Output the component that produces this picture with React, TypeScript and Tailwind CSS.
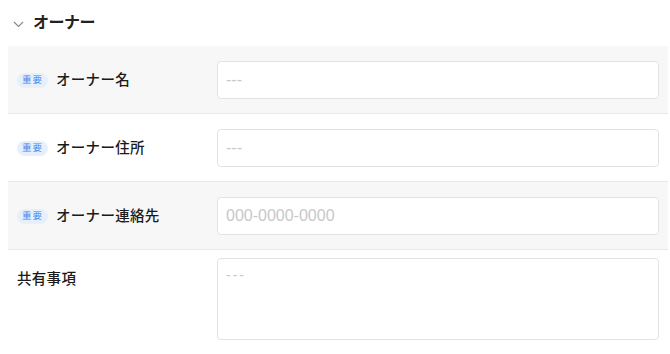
import React from "react";

const font = { fontFamily: '"Liberation Sans", "Noto Sans CJK JP", sans-serif' };

function Badge() {
  return (
    <span className="inline-flex items-center justify-center h-[15px] w-[31px] rounded-full bg-[#e6f0fd] text-[9.5px] text-[#4a86e8] tracking-[1px]">
      重要
    </span>
  );
}

function Row({
  gray,
  required,
  label,
  placeholder,
}: {
  gray: boolean;
  required: boolean;
  label: string;
  placeholder: string;
}) {
  return (
    <div
      className={`flex items-center h-[68px] pl-[9px] pr-[9px] border-b border-[#e9e9e9] ${
        gray ? "bg-[#f7f7f7]" : "bg-white"
      }`}
    >
      <div className="w-[200px] flex items-center gap-[8px] shrink-0 pt-[2px]">
        {required && <Badge />}
        <span className="text-[14.5px] font-medium text-[#1a1a1a] tracking-[0.3px]">{label}</span>
      </div>
      <input
        className="flex-1 h-[38px] rounded-[4px] border border-[#e3e3e3] bg-white px-[8px] text-[16px] text-[#333] placeholder:text-[#c8c8c8] outline-none"
        placeholder={placeholder}
        style={font}
      />
    </div>
  );
}

export default function App() {
  return (
    <div className="w-[670px] h-[354px] bg-white overflow-hidden" style={font}>
      <div className="flex items-center h-[46px] pl-[13px] gap-[9px]">
        <svg width="11" height="7" viewBox="0 0 11 7" className="mt-[2px]">
          <path d="M1 1l4.5 4.5L10 1" fill="none" stroke="#888" strokeWidth="1.1" />
        </svg>
        <span className="text-[16px] font-bold text-[#222] tracking-[-0.5px]">オーナー</span>
      </div>
      <div className="ml-[8px] mr-[2px]">
        <Row gray required label="オーナー名" placeholder="---" />
        <Row gray={false} required label="オーナー住所" placeholder="---" />
        <Row gray required label="オーナー連絡先" placeholder="000-0000-0000" />
        <div className="flex pl-[9px] pr-[9px] pt-[8px]">
          <div className="w-[200px] shrink-0 pt-[9px]">
            <span className="text-[14.5px] font-medium text-[#1a1a1a] tracking-[0.3px]">共有事項</span>
          </div>
          <textarea
            className="flex-1 h-[82px] rounded-[4px] border border-[#e3e3e3] bg-white px-[8px] py-[6px] text-[14px] text-[#333] placeholder:text-[#c8c8c8] tracking-[2px] outline-none resize-none"
            placeholder="---"
            style={font}
          />
        </div>
      </div>
    </div>
  );
}
